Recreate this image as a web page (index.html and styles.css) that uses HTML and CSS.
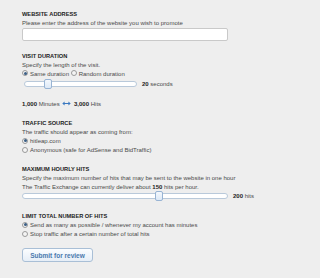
FILE: index.html
```html
<!DOCTYPE html>
<html>
<head>
<meta charset="utf-8">
<link rel="stylesheet" href="styles.css">
</head>
<body>
<div class="form">
  <section class="sec s1">
    <div class="h">WEBSITE ADDRESS</div>
    <div class="line">Please enter the address of the website you wish to promote</div>
    <div class="input"></div>
  </section>

  <section class="sec s2">
    <div class="h">VISIT DURATION</div>
    <div class="line">Specify the length of the visit.</div>
    <div class="line"><span class="radio on"></span>Same duration <span class="radio"></span>Random duration</div>
    <div class="slrow">
      <div class="track short"><span class="thumb" style="left:19px"></span></div>
      <span class="val"><b>20</b> seconds</span>
    </div>
  </section>

  <section class="sec s3">
    <div class="line"><b>1,000</b> Minutes <svg class="arr" width="9" height="5" viewBox="0 0 9 5"><path d="M0.3 2.5 L2.6 0.6 L2.6 4.4 Z M8.7 2.5 L6.4 0.6 L6.4 4.4 Z" fill="#3a78c0"/><rect x="2" y="2" width="5" height="1" fill="#3a78c0"/></svg> <b>3,000</b> Hits</div>
  </section>

  <section class="sec s4">
    <div class="h">TRAFFIC SOURCE</div>
    <div class="line">The traffic should appear as coming from:</div>
    <div class="line"><span class="radio on"></span>hitleap.com</div>
    <div class="line"><span class="radio"></span>Anonymous (safe for AdSense and BidTraffic)</div>
  </section>

  <section class="sec s5">
    <div class="h">MAXIMUM HOURLY HITS</div>
    <div class="line">Specify the maximum number of hits that may be sent to the website in one hour</div>
    <div class="line">The Traffic Exchange can currently deliver about <b>150</b> hits per hour.</div>
    <div class="slrow s2row">
      <div class="track long"><span class="thumb" style="left:132px"></span></div>
      <span class="val"><b>200</b> hits</span>
    </div>
  </section>

  <section class="sec s6">
    <div class="h">LIMIT TOTAL NUMBER OF HITS</div>
    <div class="line"><span class="radio on"></span>Send as many as possible / whenever my account has minutes</div>
    <div class="line"><span class="radio"></span>Stop traffic after a certain number of total hits</div>
  </section>

  <button class="btn">Submit for review</button>
</div>
</body>
</html>
```

FILE: styles.css
```css
html, body {
  margin: 0;
  padding: 0;
}
body {
  background: #eeeeee;
  font-family: "Liberation Sans", Arial, sans-serif;
  font-size: 6px;
  color: #4a4a4a;
  width: 320px;
  height: 278px;
  overflow: hidden;
}
.form {
  padding: 9.5px 0 0 22px;
}
.sec {
  display: flex;
  flex-direction: column;
}
.h {
  font-weight: bold;
  font-size: 5.7px;
  color: #222;
  height: 9px;
  line-height: 9px;
}
.line {
  height: 9px;
  line-height: 9px;
  white-space: nowrap;
}
.line b, .val b {
  color: #222;
}
.input {
  width: 204px;
  height: 11px;
  background: #fff;
  border: 1px solid #c9c9c9;
  border-radius: 2px;
}
.s2 { margin-top: 11px; }
.s3 { margin-top: 11px; }
.s4 { margin-top: 10px; }
.s5 { margin-top: 10px; }
.s6 { margin-top: 12px; }
.radio {
  display: inline-block;
  vertical-align: -0.5px;
  width: 4px;
  height: 4px;
  border-radius: 50%;
  border: 1px solid #9a9a9a;
  background: #f4f4f4;
  margin-right: 2px;
  position: relative;
}
.radio.on::after {
  content: "";
  position: absolute;
  left: 0.5px;
  top: 0.5px;
  width: 3px;
  height: 3px;
  border-radius: 50%;
  background: #3b5f86;
}
.slrow {
  display: flex;
  align-items: center;
  height: 10px;
  margin-top: 0.5px;
}
.track {
  position: relative;
  height: 4px;
  background: #fff;
  border: 1px solid #b9c9da;
  border-radius: 3px;
}
.track.short {
  width: 111px;
  margin-left: 2px;
}
.track.long {
  width: 204px;
}
.s2row {
  height: 8px;
  margin-top: 0;
}
.thumb {
  position: absolute;
  top: -3px;
  width: 6px;
  height: 8px;
  border: 1px solid #98b4d4;
  border-radius: 2px;
  background: linear-gradient(#f4f8fd, #dde9f6);
}
.val {
  margin-left: 5px;
}
.arr {
  vertical-align: 0;
  margin: 0 1px;
}
.btn {
  margin-top: 9px;
  width: 71px;
  height: 14px;
  padding: 0;
  font-family: "Liberation Sans", Arial, sans-serif;
  font-size: 6.5px;
  font-weight: bold;
  color: #4a79ad;
  background: linear-gradient(#fbfdff, #e6eef7);
  border: 1px solid #a9bfd6;
  border-radius: 3px;
}
```
